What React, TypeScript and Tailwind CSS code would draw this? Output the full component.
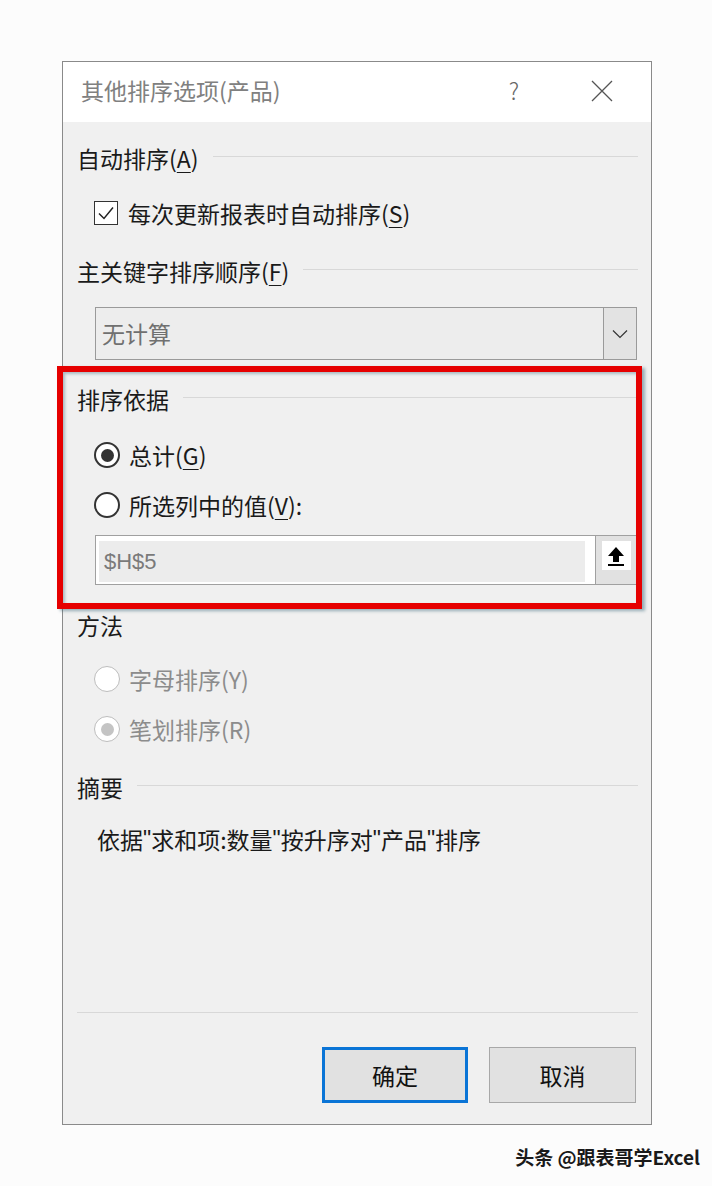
import React from 'react'

function U({ children }: { children: React.ReactNode }) {
    return <span className="underline decoration-1 underline-offset-[4px]">{children}</span>
}

function Q() {
    return <span className="font-['Liberation_Sans',sans-serif]">"</span>
}

function Heading({ children, line = true }: { children: React.ReactNode; line?: boolean }) {
    return (
        <div className="flex items-center h-[36px] pl-[14px] pr-[13px]">
            <span className="text-[#1a1a1a]">{children}</span>
            {line && <div className="flex-1 h-px bg-[#d8d8d8] ml-[14px] -mt-[4px]"></div>}
        </div>
    )
}

function Radio({ checked, disabled, children }: { checked?: boolean; disabled?: boolean; children: React.ReactNode }) {
    return (
        <div className="flex items-center h-[36px] pl-[31px]">
            <div
                className={
                    disabled
                        ? "w-[26px] h-[26px] rounded-full border-[1.5px] border-[#bdbdbd] bg-white flex items-center justify-center"
                        : "w-[26px] h-[26px] rounded-full border-2 border-[#333] bg-white flex items-center justify-center"
                }
            >
                {checked && <div className={disabled ? "w-[13px] h-[13px] rounded-full bg-[#c4c4c4]" : "w-[13px] h-[13px] rounded-full bg-[#333]"}></div>}
            </div>
            <span className={disabled ? "ml-[9px] text-[#8c8c8c]" : "ml-[9px] text-[#1a1a1a]"}>{children}</span>
        </div>
    )
}

export default function App() {
    return (
        <div className="min-h-[1186px] w-[712px] bg-[#fcfcfc] pt-[61px] text-[23px] leading-none font-['Noto_Sans_CJK_SC',sans-serif]">
            <div className="ml-[62px] w-[590px] border border-[#8a8a8a] bg-[#f0f0f0]">
                {/* title bar */}
                <div className="h-[60px] bg-white flex items-center pl-[18px] pr-[36px] pb-[3px]">
                    <span className="text-[#808080] flex-1">其他排序选项(产品)</span>
                    <span className="text-[#666] w-[30px] text-center mr-[62px] font-light">?</span>
                    <svg width="22" height="22" viewBox="0 0 22 22" className="mr-[2px]">
                        <path d="M1 1 L21 21 M21 1 L1 21" stroke="#555" strokeWidth="1.3" fill="none" />
                    </svg>
                </div>

                <div className="pt-[18px]">
                    <Heading>自动排序(<U>A</U>)</Heading>

                    <div className="flex items-center h-[36px] pl-[31px] mt-[19px]">
                        <div className="w-[24px] h-[24px] border-[1.5px] border-[#333] bg-white flex items-center justify-center">
                            <svg width="18" height="18" viewBox="0 0 18 18">
                                <path d="M2 9.5 L7 14.5 L16 3.5" stroke="#222" strokeWidth="1.5" fill="none" />
                            </svg>
                        </div>
                        <span className="ml-[10px] text-[#1a1a1a]">每次更新报表时自动排序(<U>S</U>)</span>
                    </div>

                    <div className="mt-[22px]">
                        <Heading>主关键字排序顺序(<U>F</U>)</Heading>
                    </div>

                    <div className="mt-[18px] ml-[32px] mr-[14px] h-[53px] border border-[#9a9a9a] bg-[#ededed] flex">
                        <div className="flex-1 flex items-center pl-[6px] text-[#707070]">无计算</div>
                        <div className="w-[33px] border-l border-[#9a9a9a] bg-[#e3e3e3] flex items-center justify-center">
                            <svg width="16" height="10" viewBox="0 0 16 10">
                                <path d="M1 1.5 L8 8.5 L15 1.5" stroke="#333" strokeWidth="1.2" fill="none" />
                            </svg>
                        </div>
                    </div>

                    {/* highlighted section */}
                    <div className="relative mt-[21px]">
                        <Heading>排序依据</Heading>
                        <div className="mt-[20px]">
                            <Radio checked>总计(<U>G</U>)</Radio>
                        </div>
                        <div className="mt-[14px]">
                            <Radio>所选列中的值(<U>V</U>):</Radio>
                        </div>
                        <div className="mt-[12px] ml-[32px] mr-[14px] h-[50px] border border-[#a0a0a0] bg-white flex">
                            <div className="flex-1 flex items-stretch pt-[5px] pb-[2px] pl-[3px] pr-[10px]">
                                <div className="flex-1 bg-[#ececec] flex items-center pl-[5px] text-[#7a7a7a] font-['Liberation_Sans',sans-serif] text-[22px]">$H$5</div>
                            </div>
                            <div className="w-[41px] border-l border-[#a0a0a0] bg-[#e1e1e1] flex items-start justify-center pt-[5px]">
                                <div className="w-[29px] h-[29px] bg-white flex items-center justify-center">
                                    <svg width="20" height="22" viewBox="0 0 20 22">
                                        <path d="M10 2 L18 11 L13 11 L13 17 L7 17 L7 11 L2 11 Z" fill="#000" />
                                        <rect x="2" y="19" width="16" height="2" fill="#000" />
                                    </svg>
                                </div>
                            </div>
                        </div>
                        <div className="absolute left-[-6px] right-[9px] top-[-15px] bottom-[-24px] border-[6px] border-[#e60000] shadow-[3px_2px_3px_rgba(40,90,110,0.45),inset_2px_2px_3px_rgba(40,90,110,0.35)] pointer-events-none"></div>
                    </div>

                    <div className="mt-[22px]">
                        <Heading line={false}>方法</Heading>
                    </div>
                    <div className="mt-[18px]">
                        <Radio disabled>字母排序(Y)</Radio>
                    </div>
                    <div className="mt-[14px]">
                        <Radio disabled checked>笔划排序(R)</Radio>
                    </div>

                    <div className="mt-[22px]">
                        <Heading>摘要</Heading>
                    </div>
                    <div className="mt-[16px] h-[36px] flex items-center pl-[34px] text-[#1a1a1a]">
                        依据<Q />求和项:数量<Q />按升序对<Q />产品<Q />排序
                    </div>

                    <div className="mt-[155px] ml-[14px] mr-[13px] h-px bg-[#d8d8d8]"></div>

                    <div className="mt-[34px] pb-[21px] flex justify-end gap-[21px] pr-[15px]">
                        <button type="button" className="w-[146px] h-[56px] border-[3px] border-[#0a74d6] bg-[#e1e1e1] text-[#111]">确定</button>
                        <button type="button" className="w-[147px] h-[56px] border border-[#a8a8a8] bg-[#e1e1e1] text-[#111]">取消</button>
                    </div>
                </div>
            </div>

            <div className="mt-[22px] pr-[12px] text-right text-[19px] text-[#1a1a1a] font-bold [text-shadow:0_0_2px_#fff,0_0_2px_#fff]">
                头条 @跟表哥学Excel
            </div>
        </div>
    )
}
